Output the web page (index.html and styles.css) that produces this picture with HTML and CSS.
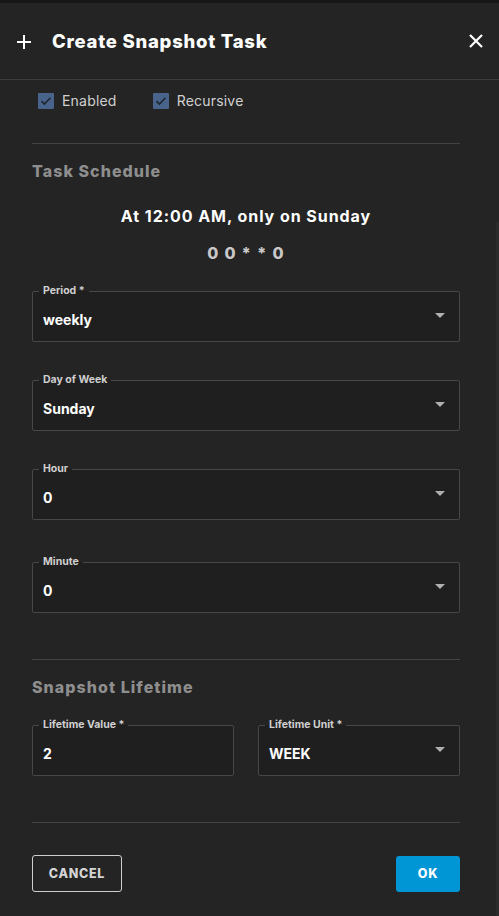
FILE: index.html
```html
<!DOCTYPE html>
<html>
<head>
<meta charset="utf-8">
<link rel="stylesheet" href="styles.css">
</head>
<body>
<div class="topbar"></div>
<div class="dialog">
  <header class="head">
    <svg class="plus" width="14" height="14" viewBox="0 0 14 14"><path d="M7 0V14M0 7H14" stroke="#fff" stroke-width="2"/></svg>
    <h1 class="title">Create Snapshot Task</h1>
    <svg class="close" width="14" height="14" viewBox="0 0 14 14"><path d="M1 1L13 13M13 1L1 13" stroke="#fff" stroke-width="2.2"/></svg>
  </header>
  <div class="body">
    <div class="checks">
      <label class="check"><span class="box"><svg width="12" height="10" viewBox="0 0 12 10"><path d="M1.5 5.2L4.4 8L10.5 1.8" fill="none" stroke="#1e2631" stroke-width="1.6"/></svg></span>Enabled</label>
      <label class="check"><span class="box"><svg width="12" height="10" viewBox="0 0 12 10"><path d="M1.5 5.2L4.4 8L10.5 1.8" fill="none" stroke="#1e2631" stroke-width="1.6"/></svg></span>Recursive</label>
    </div>
    <hr class="rule r1">
    <h2 class="section">Task Schedule</h2>
    <p class="summary">At 12:00 AM, only on Sunday</p>
    <p class="cron">0 0 * * 0</p>

    <div class="field f-period"><span class="legend">Period *</span><span class="value">weekly</span><span class="arrow"></span></div>
    <div class="field f-day"><span class="legend">Day of Week</span><span class="value">Sunday</span><span class="arrow"></span></div>
    <div class="field f-hour"><span class="legend">Hour</span><span class="value">0</span><span class="arrow"></span></div>
    <div class="field f-min"><span class="legend">Minute</span><span class="value">0</span><span class="arrow"></span></div>

    <hr class="rule r2">
    <h2 class="section s2">Snapshot Lifetime</h2>
    <div class="pair">
      <div class="field"><span class="legend">Lifetime Value *</span><span class="value">2</span></div>
      <div class="field"><span class="legend">Lifetime Unit *</span><span class="value">WEEK</span><span class="arrow"></span></div>
    </div>
    <hr class="rule r3">
    <div class="actions">
      <button class="btn cancel">CANCEL</button>
      <button class="btn ok">OK</button>
    </div>
  </div>
  <div class="scroll"></div>
</div>
</body>
</html>
```

FILE: styles.css
```css
* { box-sizing: border-box; }
html, body { margin: 0; padding: 0; }
body {
  width: 499px;
  height: 916px;
  background: #242424;
  font-family: Inter, "Liberation Sans", sans-serif;
  color: #fff;
  overflow: hidden;
}
.topbar { height: 3px; background: #161616; }
.dialog { position: relative; height: 913px; }
.head {
  height: 77px;
  display: flex;
  align-items: center;
  padding: 0 16px 0 17px;
  border-bottom: 1px solid #3c3c3c;
}
.plus { flex: none; margin-top: 1px; }
.title {
  margin: 0 0 0 21px;
  font-size: 18.5px;
  font-weight: 800;
  letter-spacing: 0.75px;
  flex: 1;
}
.close { flex: none; }
.body { padding: 0 39px 0 32px; }
.checks {
  display: flex;
  gap: 36px;
  padding: 13px 0 0 6px;
  height: 63px;
}
.check {
  display: flex;
  align-items: flex-start;
  font-size: 14px;
  color: #d0d0d0;
  line-height: 16px;
  letter-spacing: 0.2px;
}
.box {
  width: 16px; height: 16px;
  background: #48648b;
  border-radius: 1px;
  display: flex; align-items: center; justify-content: center;
  margin-right: 8px;
}
.rule { border: 0; border-top: 1px solid #444; margin: 0; }
.section {
  margin: 0;
  font-size: 16px;
  font-weight: 800;
  color: #8e8e8e;
  line-height: 20px;
  letter-spacing: 1.05px;
}
.r1 + .section { margin-top: 17px; }
.summary {
  margin: 25px 0 0;
  text-align: center;
  font-size: 16px;
  font-weight: 700;
  line-height: 20px;
  letter-spacing: 0.95px;
}
.cron {
  margin: 17px 0 0;
  text-align: center;
  font-size: 16px;
  font-weight: 800;
  color: #c8c8c8;
  letter-spacing: 1.3px;
  line-height: 20px;
}
.field {
  position: relative;
  height: 51px;
  border: 1px solid #474747;
  border-radius: 2px;
  background: #1f1f1f;
  display: flex;
  align-items: center;
  padding: 6px 10px 0;
}
.f-period { margin-top: 28px; }
.f-day { margin-top: 38px; }
.f-hour { margin-top: 38px; }
.f-min { margin-top: 42px; }
.legend {
  position: absolute;
  left: 6px;
  top: -8px;
  padding: 0 4px;
  background: linear-gradient(#242424 50%, #1f1f1f 50%);
  font-size: 10.5px;
  font-weight: 700;
  color: #cfcfcf;
  line-height: 14px;
}
.value {
  flex: 1;
  font-size: 14px;
  font-weight: 700;
  color: #fff;
}
.arrow {
  width: 0; height: 0;
  border-left: 5px solid transparent;
  border-right: 5px solid transparent;
  border-top: 5px solid #b0b0b0;
  margin: 0 4px 8px 0;
}
.r2 { margin-top: 46px; }
.s2 { margin-top: 17px; }
.pair {
  display: grid;
  grid-template-columns: 1fr 1fr;
  gap: 24px;
  margin-top: 28px;
}
.r3 { margin-top: 46px; }
.actions {
  display: flex;
  justify-content: space-between;
  align-items: center;
  margin-top: 32px;
}
.btn {
  font-family: Inter, "Liberation Sans", sans-serif;
  font-size: 12.5px;
  font-weight: 800;
  border-radius: 3px;
  height: 37px;
  cursor: pointer;
  letter-spacing: 0.7px;
}
.cancel {
  width: 90px;
  background: transparent;
  border: 1px solid #cfcfcf;
  color: #d4d4d4;
}
.ok {
  width: 64px;
  height: 36px;
  background: #0095d5;
  border: 0;
  color: #fff;
}
.scroll {
  position: absolute;
  right: 0;
  top: 219px;
  width: 3px;
  height: 694px;
  background: #2b2b2b;
}
```
